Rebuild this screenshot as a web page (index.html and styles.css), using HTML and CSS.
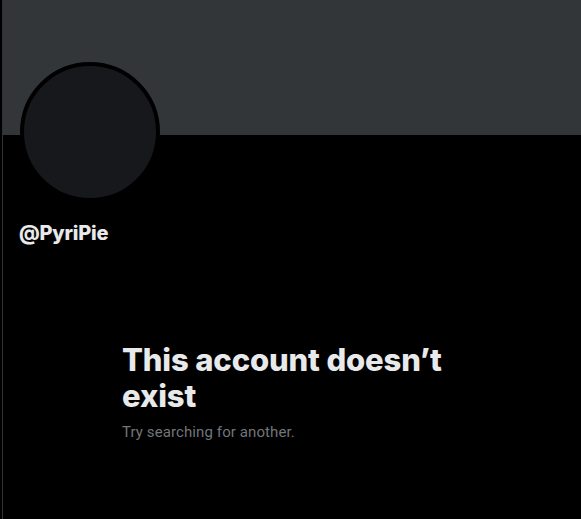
FILE: index.html
```html
<!DOCTYPE html>
<html>
<head>
<meta charset="utf-8">
<link rel="stylesheet" href="styles.css">
</head>
<body>
<div class="page">
  <div class="banner"></div>
  <div class="profile">
    <div class="avatar"></div>
    <div class="handle">@PyriPie</div>
  </div>
  <div class="empty">
    <h1 class="empty-title">This account doesn’t exist</h1>
    <p class="empty-sub">Try searching for another.</p>
  </div>
</div>
</body>
</html>
```

FILE: styles.css
```css
html, body {
  margin: 0;
  padding: 0;
  background: #000;
  height: 100%;
}
body {
  font-family: "Inter", "Roboto", "Liberation Sans", sans-serif;
  color: #e7e9ea;
}
.page {
  margin-left: 2px;
  border-left: 1px solid #2f3336;
  min-height: 100%;
  box-sizing: border-box;
}
.banner {
  height: 135px;
  background: #333639;
}
.profile {
  padding: 0 17px 0 16px;
}
.avatar {
  width: 132px;
  height: 132px;
  margin-top: -73px;
  margin-left: 1px;
  border: 4px solid #000;
  border-radius: 50%;
  background: #16181c;
}
.handle {
  margin-top: 19px;
  font-size: 20px;
  line-height: 24px;
  font-weight: 800;
  letter-spacing: -0.2px;
}
.empty {
  width: 336px;
  padding-right: 4px;
  margin: 97px auto 0;
}
.empty-title {
  margin: 0;
  font-size: 31px;
  line-height: 36px;
  font-weight: 800;
  letter-spacing: -0.15px;
}
.empty-sub {
  margin: 8px 0 0;
  font-family: "Roboto", "Liberation Sans", sans-serif;
  font-size: 15px;
  line-height: 20px;
  color: #71767b;
  font-weight: 400;
  letter-spacing: 0.1px;
}
```
